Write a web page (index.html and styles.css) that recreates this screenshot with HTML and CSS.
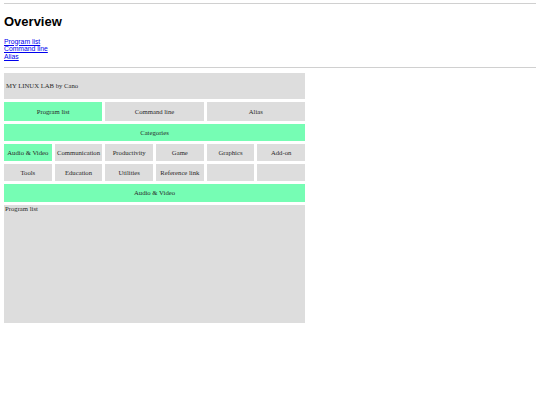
FILE: index.html
```html
<!DOCTYPE html>
<html lang="en">
<head>
<meta charset="utf-8">
<title>Overview</title>
<link rel="stylesheet" href="styles.css">
</head>
<body>
<hr class="rule rule-top">
<h1 class="title">Overview</h1>
<nav class="toc">
  <a href="#program-list">Program list</a>
  <a href="#command-line">Command line</a>
  <a href="#alias">Alias</a>
</nav>
<hr class="rule rule-bottom">
<main class="app">
  <header class="app-header">MY LINUX LAB by Cano</header>
  <div class="tabs">
    <div class="cell active">Program list</div>
    <div class="cell">Command line</div>
    <div class="cell">Alias</div>
  </div>
  <div class="bar">Categories</div>
  <div class="cats">
    <div class="cell active">Audio &amp; Video</div>
    <div class="cell">Communication</div>
    <div class="cell">Productivity</div>
    <div class="cell">Game</div>
    <div class="cell">Graphics</div>
    <div class="cell">Add-on</div>
    <div class="cell">Tools</div>
    <div class="cell">Education</div>
    <div class="cell">Utilities</div>
    <div class="cell">Reference link</div>
    <div class="cell"></div>
    <div class="cell"></div>
  </div>
  <div class="bar bar-sel">Audio &amp; Video</div>
  <section class="list">Program list</section>
</main>
</body>
</html>
```
FILE: styles.css
```css
html, body {
  background: #ffffff;
}
body {
  margin: 0;
  padding: 3px 4px 0 4px;
  font-family: "Liberation Sans", Arial, sans-serif;
  color: #000;
}
.rule {
  border: 0;
  border-top: 1px solid #d0d0d0;
  height: 0;
  margin: 0;
}
.title {
  font-size: 13px;
  line-height: 15px;
  font-weight: bold;
  margin: 10px 0 8.5px 0;
}
.toc {
  display: flex;
  flex-direction: column;
  align-items: flex-start;
  font-size: 6.8px;
  line-height: 7.6px;
}
.toc a {
  color: #0000ee;
  text-decoration: underline;
}
.rule-bottom {
  margin-top: 6.7px;
}
.app {
  width: 301px;
  margin-top: 5px;
  display: grid;
  grid-template-rows: 26px 19px 17px 17px 17px 18px 118px;
  row-gap: 3px;
  font-family: "Liberation Serif", "Times New Roman", serif;
  font-size: 6.7px;
  color: #2a2a2a;
}
.app-header {
  background: #dddddd;
  display: flex;
  align-items: center;
  padding-left: 2px;
}
.tabs {
  display: grid;
  grid-template-columns: repeat(3, 1fr);
  column-gap: 3px;
}
.cats {
  display: grid;
  grid-template-columns: repeat(6, 1fr);
  grid-template-rows: 17px 17px;
  gap: 3px;
  grid-row: span 2;
}
.cell {
  background: #dddddd;
  display: flex;
  align-items: center;
  justify-content: center;
  white-space: nowrap;
}
.cell.active {
  background: #76fdb4;
}
.bar {
  background: #76fdb4;
  display: flex;
  align-items: center;
  justify-content: center;
}
.list {
  background: #dddddd;
  padding: 0 1px;
  line-height: 7.6px;
}
```
